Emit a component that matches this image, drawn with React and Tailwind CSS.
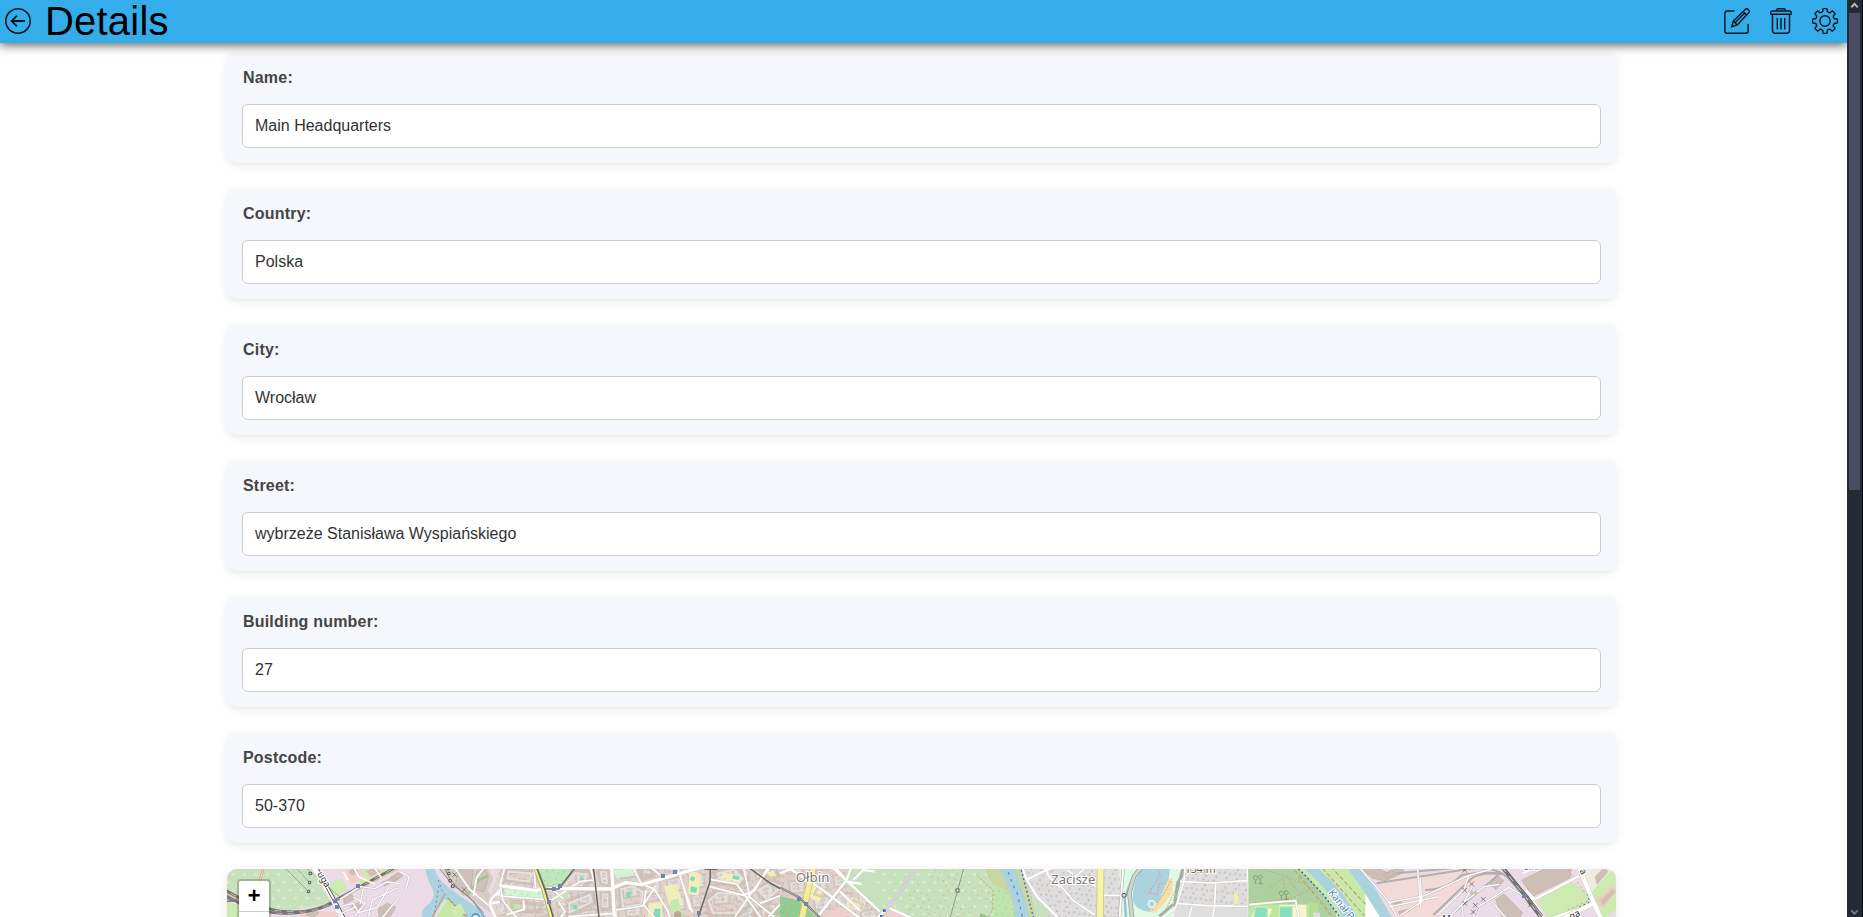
const fields = [
  ['Name:', 'Main Headquarters'],
  ['Country:', 'Polska'],
  ['City:', 'Wrocław'],
  ['Street:', 'wybrzeże Stanisława Wyspiańskiego'],
  ['Building number:', '27'],
  ['Postcode:', '50-370'],
];

const gearPath = Array.from({ length: 8 }, (_, i) => {
  const at = (deg, r) => {
    const a = ((i * 45 + deg) * Math.PI) / 180;
    return `${(13 + r * Math.sin(a)).toFixed(2)} ${(13 - r * Math.cos(a)).toFixed(2)}`;
  };
  return `${i ? 'L' : 'M'}${at(-12, 10)} Q${at(-12, 12.3)} ${at(-7, 12.5)} L${at(7, 12.5)} Q${at(12, 12.3)} ${at(12, 10)} Q${at(22.5, 8.6)} ${at(33, 10)}`;
}).join(' ') + 'Z';

function BackIcon() {
  return (
    <svg className="size-[26px]" viewBox="0 0 26 26" fill="none" stroke="#06161f" strokeWidth="1.5">
      <circle cx="13" cy="13" r="12.2" />
      <path d="M20 13H7M12 7.6 6.6 13l5.4 5.4" strokeWidth="1.8" />
    </svg>
  );
}

function EditIcon() {
  return (
    <svg className="size-[26px]" viewBox="0 0 26 26" fill="none" stroke="#06161f" strokeWidth="1.4" strokeLinejoin="round">
      <path d="M10.5 3H3.2A2.3 2.3 0 0 0 .9 5.2v17.7a2.3 2.3 0 0 0 2.3 2.3h18.6a2.3 2.3 0 0 0 2.3-2.3v-7" />
      <path d="M7.7 18.8 9.4 13 21.3 1.4a2 2 0 0 1 2.8 0l.6.6a2 2 0 0 1 0 2.8L13.2 16.9ZM9.4 13l3.8 3.9M19.2 3.5l3.5 3.5M11 14.8 20.5 5.2M7.7 18.8l2-.6-1.4-1.4Z" />
    </svg>
  );
}

function TrashIcon() {
  return (
    <svg className="size-[26px]" viewBox="0 0 26 26" fill="none" stroke="#06161f" strokeWidth="1.4" strokeLinejoin="round">
      <path d="M4.2 3h17.6a1.4 1.4 0 0 1 1.4 1.4v1.9H2.8V4.4A1.4 1.4 0 0 1 4.2 3ZM8.8 3V1.8A1.1 1.1 0 0 1 9.9.8h6.2a1.1 1.1 0 0 1 1.1 1V3M4.5 6.4v16.2a2.6 2.6 0 0 0 2.6 2.6h11.8a2.6 2.6 0 0 0 2.6-2.6V6.4" />
      <path d="M9.3 10v11.5M13 10v11.5M16.7 10v11.5" />
    </svg>
  );
}

function GearIcon() {
  return (
    <svg className="size-[26px]" viewBox="0 0 26 26" fill="none" stroke="#06161f" strokeWidth="1.4" strokeLinejoin="round">
      <path d={gearPath} />
      <circle cx="13" cy="13" r="5.2" />
    </svg>
  );
}

function Road({ d, w = 7, c = '#fff' }) {
  return (
    <g fill="none">
      <path d={d} stroke="#cfc5c0" strokeWidth={w + 2} />
      <path d={d} stroke={c} strokeWidth={w} />
    </g>
  );
}

function Rail({ d, w = 5 }) {
  return (
    <g fill="none">
      <path d={d} stroke="#747270" strokeWidth={w + 2} />
      <path d={d} stroke="#e4e2e0" strokeWidth={w / 3} strokeDasharray="20 16" />
    </g>
  );
}

function Stops({ points }) {
  return points.map(([x, y]) => <rect key={`${x}-${y}`} x={x - 6} y={y - 6} width="12" height="12" fill="#7480b8" />);
}

function Crosses({ points }) {
  return <path d={points.map(([x, y]) => `M${x - 7} ${y - 7}l14 14m0-14l-14 14`).join('')} stroke="#555" strokeWidth="2" />;
}

const label = { fontFamily: '"Noto Sans", sans-serif', fill: '#777', stroke: '#fff', strokeWidth: 6, paintOrder: 'stroke', strokeLinejoin: 'round' };

// Each tile is drawn in third-of-a-pixel units, starting 29px above the visible edge.
function Tile({ x, children }) {
  return <g transform={`translate(${x - 227} -29) scale(.33333)`}>{children}</g>;
}

function MapView() {
  return (
    <svg className="block h-[48px] w-[1389px]" viewBox="0 0 1389 48">
      <defs>
        <pattern id="trees" width="34" height="48" patternUnits="userSpaceOnUse">
          <path d="M6 4v7M2 7h8M23 28v7M19 31h8" stroke="#e2f2d8" strokeWidth="3" />
        </pattern>
        <pattern id="town" width="67" height="59" patternUnits="userSpaceOnUse" patternTransform="rotate(-8)">
          <rect width="67" height="59" fill="#ddd2cc" />
          <path d="M9 10h45v37H9Z" fill="#e2dfdd" stroke="#cfc1b9" strokeWidth="5" />
          <path d="M17 20h28M18 33h20M34 15v26" stroke="#cbc1bb" strokeWidth="3" />
          <path d="M5 3h3M25 25h3M48 36h3M17 42h3M58 11h3M41 5h3M61 51h3M28 55h3" stroke="#ea7f72" strokeWidth="3" />
        </pattern>
        <pattern id="houses" width="31" height="29" patternUnits="userSpaceOnUse" patternTransform="rotate(7)">
          <path d="M4 4h6v6H4ZM20 7h5v6h-5ZM11 21h6v5h-6Z" fill="#c9bbb2" />
        </pattern>
        <pattern id="shrub" width="51" height="43" patternUnits="userSpaceOnUse">
          <path d="M5 5h3M20 15h3M37 8h3M13 31h3M31 36h3M44 25h3" stroke="#ea8471" strokeWidth="3" />
        </pattern>
      </defs>

      <Tile x={220}>
        <path d="M0 80h920v160H0Z" fill="#ebdbe7" />
        <path d="M0 80h285l60 105-180 35L0 150Z" fill="#c8e1bd" />
        <path d="M0 80h285l60 105-180 35L0 150Z" fill="url(#trees)" />
        <path d="m315 135 50-20 18 35-48 25ZM0 180l60 15v40H0ZM430 80h90l-92 60-35-48Z" fill="#cdebb0" />
        <path d="m365 95 50-15 22 30-42 22ZM445 80h60l-55 40ZM235 230l45-16 70 2v20H235Z" fill="#f1cfcb" />
        <path d="m387 97 14-15 12 11-14 12ZM440 95l24-12 15 12-25 12ZM510 113l24-16 15 11-25 17ZM475 205l28-15 25 12-21 33h-30ZM370 175l26-12 8 14-31 15ZM390 200l24-12 20 10-26 16ZM484 128l38-18 10 8-38 21ZM275 210l22 8-17 15-22-8Z" fill="#cdbfb7" stroke="#b9a8a0" strokeWidth="1.5" />
        <path d="M0 148q95 63 215 69 78-5 135-36L560 72" fill="none" stroke="#d8cb94" strokeWidth="7" />
        <Rail d="M0 140q90 60 180 73 100 11 162-30L530 80" w={6} />
        <Rail d="M0 155q95 65 200 66 90-3 145-35" w={5} />
        <path d="M0 155 60 195M0 165l60 25M0 175l60 10M0 184h60M0 190l60-15" stroke="#777" strokeWidth="3" />
        <path d="m195 84 70 70M230 85l37 42M258 84l100 85" fill="none" stroke="#96a58f" strokeWidth="2.5" />
        <path d="m130 84-10 38" stroke="#d99a78" strokeWidth="7" />
        <path d="m130 84-10 38" stroke="#f7e5db" strokeWidth="3" />
        <Road d="M280 80 340 180 370 240" w={15} />
        <path d="m292 80 60 108 26 50M300 110l42 77" fill="none" stroke="#555" strokeWidth="3" />
        <path d="m360 178 60-38 46 6 33-20 42 5M360 200l40-10 16 28 55-16 35-58M430 145l-10 48M445 230l12-50 75-36M540 95l28 16-12 40M485 235l50-60M400 172l35 18-30 38M354 225l55-25" fill="none" stroke="#c6b8c0" strokeWidth="7" />
        <path d="m360 178 60-38 46 6 33-20 42 5M360 200l40-10 16 28 55-16 35-58M430 145l-10 48M445 230l12-50 75-36M540 95l28 16-12 40M485 235l50-60M400 172l35 18-30 38M354 225l55-25" fill="none" stroke="#fff" strokeWidth="4" />
        <path d="M615 80h28q5 35 42 62l62 45q42 25 56 50h-72l-56-60-42 60h-27q-4-29 17-42 27-26 15-48-18-30-23-67Z" fill="#aad3df" />
        <path d="m684 175 58 60h-95Z" fill="#c5e7a8" />
        <path d="m672 166-37 70M684 175l58 60" stroke="#c8a76d" strokeWidth="4" />
        <path d="m655 120 10 29q27 43 84 84M657 137l-15 92" fill="none" stroke="#8b82bd" strokeWidth="3" strokeDasharray="7 8" />
        <path d="M660 80h140l20 35-16 37 40 66v20l-95-60-63-58Z" fill="#d8ccc6" />
        <path d="m717 91 22-10 20 9-6 61-23 15-25-32ZM770 94l25-11 10 30-13 43-28-8Z" fill="#d0c2bb" stroke="#b8aca5" strokeWidth="2" />
        <path d="m654 80 44 55 48 34 45 50M672 80l16 34 22 27 49 42 35 50" fill="none" stroke="#888" strokeWidth="3" />
        <path d="m742 165 35-45 27-13" stroke="#9bc490" strokeWidth="8" fill="none" />
        <Road d="m704 83 45 65 95 80M794 80l-24 33-10 55" w={5} />
        <path d="m843 80 67 22v135h-90l-12-60Z" fill="#e0d7d1" />
        <path d="m843 80 67 22v135h-90l-12-60Z" fill="url(#shrub)" />
        <path d="m858 145 49-17v48l-38 1ZM689 210l32-20 15 28-25 18Z" fill="#cdebb0" />
        <path d="m853 92 51 10-7 25-50-10ZM850 187l46-5 10 30-41 12Z" fill="none" stroke="#b8a99f" strokeWidth="7" />
        <Road d="m860 80-15 65-17 18q-25 20-15 40l18 40M830 165l36-14 55 32M860 131l54 12M810 190l70-10 29 28" w={8} />
        <path d="m370 95 14 25M400 80l16 30 48 22M465 85l20 30" stroke="#fff" strokeWidth="5" fill="none" />
        <Stops points={[[414, 138], [345, 184], [351, 201]]} />
        <Crosses points={[[704, 104], [733, 149]]} />
        <path d="M267 97h8v7h-8ZM265 124h7v7h-7ZM262 151h7v7h-7ZM681 82h8v7h-8ZM683 97h7v7h-7ZM687 119h7v7h-7ZM694 135h8v8h-8Z" fill="#ddd" stroke="#555" strokeWidth="3" />
        <circle cx="767" cy="234" r="12" fill="#cfe6ed" stroke="#3e91be" strokeWidth="4" />
        <text x="291" y="101" transform="rotate(60 291 101)" fontSize="28" {...label} fill="#333">uga</text>
      </Tile>

      <Tile x={500}>
        <path d="M0 80h930v160H0Z" fill="url(#town)" />
        <path d="M105 80h120l-48 65h-45Z" fill="#b9e8bc" /><path d="M15 140 130 157l25 20-145-4ZM338 90l73-6-13 23-48 7Z" fill="#cff5d6" />
        <path d="M105 80h120l-48 65h-45ZM15 140 130 157l25 20-145-4Z" fill="url(#shrub)" />
        <path d="m492 139 37-6 22 62-42 5ZM447 191l40-4v48h-45ZM568 90l35 12-8 65-30-5ZM670 95l61 16-20 22-50-14ZM805 97l19-6 8 14-15 15-18-6Z" fill="#f2eebc" />
        <path d="m819 225 30-40 45-5v54Z" fill="#a6d08c" /><path d="m25 180 35 4-10 45-23-20ZM170 160l40-9-10 19-35 16ZM510 183l25-8 15 60-40-19Z" fill="#c7e7b1" />
        <path d="M640 80 630 165 600 230h120l40-65-28-85Z" fill="url(#shrub)" />
        <path d="m20 91 90 4-7 38-86-11ZM34 186l90 8-5 22-83-5ZM184 143l43-52 46 5-13 42ZM204 180l73-25 7 35-82 40ZM300 94h24l2 43-21-5ZM307 160h20v48h-20ZM358 142l40-10 38 18-4 47-69 11ZM417 87l35-4 7 24-35 12ZM617 180l30-30 65 8 38 35-35 35h-86ZM642 93l68-11 30 34-18 24-78-12ZM770 150l46-32 44 22-58 51ZM780 92l42-10 14 27-25 7ZM780 202l31 9-22 29-31-17Z" fill="none" stroke="#cbbab1" strokeWidth="11" opacity=".7" />
        <path d="m25 95 70 5-7 25-65-9ZM190 142l36-43 32 5-12 31ZM208 190l62-26 6 22-68 31ZM302 96h17l2 34-14-4ZM308 163h15v37h-15ZM363 147l35-8 31 17-6 38-54 7ZM625 184l30-26 53 5 31 29-29 27h-70ZM655 99l47-10 25 27-11 14-55-12ZM775 151l40-24 29 14-44 37Z" fill="none" stroke="#e7e3e1" strokeWidth="5" />
        <path d="m378 159 12-5 3 17-13 5ZM463 206h18v28h-20ZM573 139l20 4-5 15-17-2ZM573 108l12 4-3 12-12-3ZM700 105l20 5-5 10-19-4ZM220 194h12v14h-12ZM237 118l9-9 7 9-8 9Z" fill="#7edcbc" />
        <circle cx="533" cy="225" r="11" fill="#b8a596" />
        <Road d="M15 80 0 135l9 47 50 62M0 137l105 14 55-6M102 80l5 70M0 168l159 12M155 180l85-55 40-5M160 145l170 2 47-19 48 6L610 80M160 151l30 25M331 80l19 160M348 210l80-12 40-62M400 85l25 48 38 14 41 67 8 28M270 80l20 68M450 80l30 25M533 80 570 210M538 103l40 115M630 140l100 26 35-15 40-71M630 118l80 14 72 100M730 80l20 92 80 65M705 230l42-61 68-95M780 190l90-34M805 230l70-72M205 230l140-10M175 184l20 31-18 23M70 181l3 27-54 16M438 150l-7 45 35 40" w={5} />
        <Road d="m335 80 8 150M0 137l105 14 55-6 170 2 47-19 48 6L610 80" w={10} />
        <path d="m105 80 25 65 27 95" stroke="#a8a266" strokeWidth="14" fill="none" />
        <path d="m105 80 25 65 27 95" stroke="#f0ed91" strokeWidth="10" fill="none" />
        <path d="m109 80 25 67 28 92M132 147h44l50-65M280 80l18 160M631 85l-1 40-35 106M614 88h38M745 82l65 47 90 48" fill="none" stroke="#636864" strokeWidth="4.5" />
        <Stops points={[[162, 147], [180, 138], [147, 186], [489, 108], [525, 96], [597, 219], [895, 177]]} />
      </Tile>

      <Tile x={780}>
        <path d="M0 80h920v160H0Z" fill="url(#town)" />
        <path d="M215 80h470l85 160H350l-40-22-130-95Z" fill="#c8e1bd" />
        <path d="M280 80h370l65 160H350l-40-22Z" fill="url(#trees)" />
        <path d="M375 125h110v45l60-20 85 45 65 20v-60l-60 5-75-50-40-20h-70v40l-65 20v60l90 25h110v-32l-80-25" fill="url(#shrub)" />
        <path d="M0 168 58 183l60 57H0Z" fill="#92cc92" /><path d="M0 168 58 183l60 57H0Z" fill="url(#shrub)" />
        <path d="m96 133 43 17-24 39-31-21ZM215 171l42 18-14 27-49-19Z" fill="#f4edb7" />
        <path d="m122 234 55-35 42 29ZM310 233l30-27 52 27Z" fill="#efcecb" />
        <path d="m112 145 21 7-9 18-21-8ZM220 181l28 12-6 13-29-13Z" fill="none" stroke="#dccdb4" strokeWidth="8" />
        <Road d="M0 100 50 80M30 86l100 65 119 91M117 225l83-105 16-45M155 80l145 135M170 86l30 38 45 8M220 120l30-30 35 5M180 155l60 56M285 240l40-37 85 38" w={7} />
        <path d="M102 75Q80 165 65 238" stroke="#c9c16f" strokeWidth="20" fill="none" /><path d="M102 75Q80 165 65 238" stroke="#f3ec9a" strokeWidth="16" fill="none" />
        <path d="M0 143 56 171l68 66" stroke="#666d68" strokeWidth="6" fill="none" /><path d="M0 143 56 171l68 66" stroke="#ddd" strokeWidth="2" fill="none" />
        <Road d="M320 213q7-23 40-55 11-13 26-52 9-14 30-20" w={8} c="#d4d3df" />
        <path d="m551 86-41 148" stroke="#8b9d83" strokeWidth="3" /><rect x="528" y="147" width="9" height="9" fill="#eee" stroke="#666" strokeWidth="3" />
        <path d="M610 80h120l40 160H690q-50-100-80-160Z" fill="#c8d6a1" />
        <path d="m635 133 46 18 17 45 7 44h-65Z" fill="#bce6ae" /><path d="m635 133 46 18 17 45 7 44h-65Z" fill="url(#shrub)" />
        <path d="M655 80h45q15 30 22 65 15 28 25 95h-43q5-49-17-89-9-34-32-71Z" fill="#aad3df" />
        <path d="m685 96 12 35 15 30 17 79" stroke="#857bb7" strokeWidth="4" strokeDasharray="8 14" fill="none" />
        <path d="M735 80h185v160H770l-15-70Z" fill="#dedede" /><path d="M735 80h185v160H770l-15-70Z" fill="url(#houses)" />
        <path d="m756 166 56 46-11 22h-32Z" fill="#c8e1bd" />
        <Road d="m726 80 13 38 35 55 65 65M740 119l60-30 35-9M793 80l15 31 80 75 32 50" w={7} />
        <path d="m724 90 15 60 22 85" stroke="#4a52d9" strokeWidth="4" strokeDasharray="5 8" fill="none" />
        <path d="m590 105 49 45-1 60-12 20" fill="none" stroke="#cfa47d" strokeWidth="3" strokeDasharray="8 5" />
        <path d="m600 220 50 20h-52Z" fill="#8fc47e" />
        <Stops points={[[57, 177], [78, 192]]} />
        <path d="M309 208h8v8h-8ZM300 225h7v7h-7Z" fill="#4d58e1" />
        <text x="47" y="126" fontSize="40" {...label}>Ołbin</text>
      </Tile>

      <Tile x={1060}>
        <path d="M0 80h180v160H0ZM350 80h225v160H340Z" fill="#dedede" />
        <path d="M0 80h180v160H0ZM370 80h195v115H350Z" fill="url(#houses)" />
        <path d="M177 80h205l-45 160H185Z" fill="#dff9e2" />
        <path d="M245 80h85l-5 45-31 68-25 23q-48-6-51-41 0-44 27-95Z" fill="#aad3df" />
        <path d="m326 113 13 5-5 45-25 31-24 24-17-5 31-35Z" fill="#f5dfa6" />
        <path d="m293 92 9 14-26 35-8 18 24 6 4-32 17-4M332 124l-18 35-39 53M352 138l-45 92" stroke="#e99185" strokeWidth="3" strokeDasharray="5 4" fill="none" />
        <circle cx="275" cy="192" r="10" stroke="#e5f6fb" strokeWidth="5" fill="none" />
        <path d="m250 80-37 44-19 50 4 60" stroke="#8fc0d5" strokeWidth="7" fill="none" />
        <path d="m246 80-24 29-14 50 9 80" stroke="#9fa6a2" strokeWidth="14" fill="none" /><path d="m246 80-24 29-14 50 9 80" stroke="#cbd8cf" strokeWidth="9" fill="none" />
        <path d="m190 80-11 150M340 193l-42 36M344 185l7-35 18-65M382 80l-29 48-9 70" stroke="#a3b0a7" strokeWidth="9" fill="none" />
        <Road d="m190 80-11 150M0 135l40 47 65 43M80 80 30 125M20 91l90 50M125 166h54M350 190l90 7 114 2h75M360 124l90 5 112-7V80M467 128l-3 70-8 42M565 120v110M396 200l-12 40M376 80l-5 47-25 79-50 34" w={5} />
        <path d="m122 75-2 165" stroke="#c6c36b" strokeWidth="22" /><path d="m122 75-2 165" stroke="#f4f4ac" strokeWidth="18" />
        <circle cx="192" cy="166" r="6" fill="#ddd" stroke="#555" strokeWidth="3" />
        <path d="M522 159h12v32h-12Z" fill="#f5efa5" />
        <path d="M565 80h265v160H565Z" fill="#acd0a0" /><path d="M570 193h178v47H565Z" fill="#bce79c" />
        <path d="m588 198 48 9-12 33h-53ZM657 194h82v46h-82Z" fill="#f7f4ce" />
        <path d="m586 199 36 4v37h-42ZM658 200h39v40h-39Z" fill="#87dfbf" stroke="#d1e9ad" strokeWidth="4" />
        <path d="m600 85 80 25 80 33-65 31-115 15M625 145l45-30 10 70M680 110l50 65" stroke="#dc9386" strokeWidth="3" strokeDasharray="4 6" fill="none" />
        <Road d="m567 194 65-6 75-6 11 60" w={5} />
        <path d="M746 188h30v50h-23Z" fill="#b6dd92" /><path d="M760 218h20v16h-20Z" fill="#ddd" />
        <path d="M708 80h208v160h-75q-50-91-133-160Z" fill="#c9e9ab" />
        <path d="M725 80h42q88 70 128 160h-45Q814 151 725 80Z" fill="#aad3df" />
        <path d="m716 86 75 79 55 75" fill="none" stroke="#2e44dc" strokeWidth="4" strokeDasharray="5 8" />
        <path d="m704 91 76 91 43 56M788 85l125 142M813 80l107 117" fill="none" stroke="#c6a36f" strokeWidth="4" strokeDasharray="13 7" />
        <g fill="none" stroke="#7da278" strokeWidth="3"><path d="M587 132v-10q-14-14 0-15 13 3 0 15M595 131h14M601 131v-13l-7-8 7-5 7 6-7 7M664 179v-10q-14-14 0-15 13 3 0 15M672 178h14M679 178v-13l-7-8 7-5 7 6-7 7" /></g>
        <path d="M380 80h75v18H380Z" fill="#a2c98d" />
        <text x="374" y="99" fontSize="32" {...label} fill="#7a583b">134 m</text>
        <text x="-26" y="132" fontSize="39" {...label}>Zacisze</text>
      </Tile>

      <Tile x={1340}>
        <path d="M65 80h780v160H160Z" fill="#ebdbe7" />
        <path d="m107 113 250-22 110 15-75 35-120 99H165Z" fill="#f2dad8" />
        <path d="M20 80h46l95 160h-36Q75 155 20 80Z" fill="#aad3df" />
        <path d="m70 85 35-5 34 17 45-15 9 15-58 26-37-8-18-16ZM130 105l25-14 12 11-26 12ZM467 178l25-16 56 57-13 20h-45ZM450 132l22-24 20 14-24 26ZM545 121l75-38h75l-5 30-112 56ZM158 188l25-8 3 6-26 8ZM175 215l31-7 2 6-31 9Z" fill="#cdbfb6" stroke="#b7aaa2" strokeWidth="2" />
        <path d="M110 130 380 88q80-12 120 22l75 82M170 100l215-20M255 150q65 0 110-45 65-12 123-3M280 225l115-110q30-20 90-12M315 240l120-101 40-35" fill="none" stroke="#b0aeae" strokeWidth="6" />
        <path d="M60 85 146 185 177 240M145 188l110-21 130-60 70-20M240 113l5 62-10 18M150 200l142-29M182 225l78-49M292 225l80-77 15-44M320 238l50-49 63-49 45-7M370 235l-4-38 30-55M400 230l14-30 50-30 42-28 35 20 70 78M455 184l48 56M233 90l9 110" fill="none" stroke="#c4b7bc" strokeWidth="7" />
        <path d="M60 85 146 185 177 240M145 188l110-21 130-60 70-20M240 113l5 62-10 18M150 200l142-29M182 225l78-49M292 225l80-77 15-44M320 238l50-49 63-49 45-7M370 235l-4-38 30-55M400 230l14-30 50-30 42-28 35 20 70 78M455 184l48 56M233 90l9 110" fill="none" stroke="#fff" strokeWidth="4" />
        <path d="m591 181 103-57 46 33 12 36-125 47Z" fill="#cdebb0" />
        <path d="m690 85 35 10 45 105 65-38V80Z" fill="#ececdf" /><path d="m755 157 63-70h22v110l-48 43-27-50Z" fill="#cdebb0" />
        <path d="m768 182 48-43 18 10-45 55Z" fill="#f3c8bd" />
        <path d="m764 110 28-28 14 12-35 42ZM780 182l38-34 9 8-38 40Z" fill="#ccc0b3" />
        <path d="m686 91 65 89-75 33" stroke="#e7907a" strokeWidth="3" strokeDasharray="5 10" fill="none" />
        <path d="m729 106 20 80-80 40" stroke="#4b55c8" strokeWidth="4" strokeDasharray="5 9" fill="none" />
        <Road d="m548 100 36-17M558 151l26 27 134-70M569 166l43 65M620 240l142-49" w={7} />
        <Road d="m716 80 44 106 28 60M760 190l-90 45" w={13} />
        <Rail d="m485 80 68 86 57 77" w={8} /><path d="m495 84 71 88 43 55" stroke="#636260" strokeWidth="3" />
        <path d="m388 156 7-6 6 7 6-6 6 7-6 8-6-4-7 5Z" fill="#cdbfb6" />
        <Stops points={[[552, 168]]} />
        <Crosses points={[[374, 91], [395, 132], [374, 151], [374, 190], [430, 178], [406, 196], [400, 216], [571, 195]]} />
        <text x="552" y="91" fontSize="25" {...label} fill="#555">5.H.</text>
        <text x="718" y="92" fontSize="28" transform="rotate(62 718 92)" {...label} fill="#333">a</text>
        <text x="692" y="240" fontSize="29" transform="rotate(-24 692 240)" {...label} fill="#333">ga</text>
        <text x="307" y="247" fontSize="28" {...label} fill="#333">M</text>
        <text x="-36" y="158" fontSize="30" transform="rotate(52 -36 158)" {...label} fill="#4882ae">Kanał Powodziowy</text>
      </Tile>
    </svg>
  );
}

export default function App() {
  return (
    <div className="flex h-[917px] w-[1863px] overflow-hidden bg-white font-['Liberation_Sans',Arial,sans-serif]">
      <div className="flex min-w-0 flex-1 flex-col overflow-hidden">
        <header className="z-10 flex h-[43px] shrink-0 items-start bg-[#36adeb] pt-[8px] pr-[9px] pl-[5px] shadow-[0_2px_10px_rgba(0,0,0,.65)]">
          <BackIcon />
          <h1 className="-mt-[8px] ml-[14px] flex-1 text-[40px] leading-[43px] tracking-[0.2px] text-black">Details</h1>
          <div className="flex gap-[18px]">
            <EditIcon />
            <TrashIcon />
            <GearIcon />
          </div>
        </header>
        <main className="ml-[227px] flex w-[1389px] shrink-0 flex-col gap-[26px] pt-[10px]">
          {fields.map(([name, value]) => (
            <section key={name} className="h-[110px] rounded-[10px] bg-[#f4f7fc] px-[15px] pt-[15px] shadow-[0_2px_10px_rgba(0,0,0,.1)]">
              <div className="h-[36px] pl-px text-base leading-[19px] font-bold tracking-[0.2px] text-[#444]">{name}</div>
              <div className="flex h-[44px] items-center rounded-[6px] border border-[#ccc] bg-white px-[12px] pb-[2px] text-base leading-[19px] text-[#333]">{value}</div>
            </section>
          ))}
          <section className="relative h-[400px] overflow-hidden rounded-[10px] shadow-[0_2px_10px_rgba(0,0,0,.1)]">
            <MapView />
            <div className="absolute top-[10px] left-[10px] w-[34px] rounded-[4px] border-2 border-black/20 bg-white bg-clip-padding">
              <div className="h-[31px] border-b border-[#ccc] pt-[2px] text-center font-['Liberation_Mono',monospace] text-[22px] leading-[30px] font-bold text-black">+</div>
              <div className="h-[30px]" />
            </div>
          </section>
        </main>
      </div>
      <aside className="flex w-[16px] shrink-0 flex-col border-r border-[#080a17] bg-[#252934] pl-[2px]">
        <svg className="h-[13px] w-[11px]" viewBox="0 0 11 13" fill="none" stroke="#b6b6b6" strokeWidth="2"><path d="m2.3 7.3 3.2-3.5 3.2 3.5" /></svg>
        <div className="h-[477px] w-[11px] bg-[#4a4c63]" />
        <svg className="mt-auto h-[13px] w-[11px]" viewBox="0 0 11 13" fill="none" stroke="#777" strokeWidth="2"><path d="m2.3 6.3 3.2 3.5 3.2-3.5" /></svg>
      </aside>
    </div>
  );
}
